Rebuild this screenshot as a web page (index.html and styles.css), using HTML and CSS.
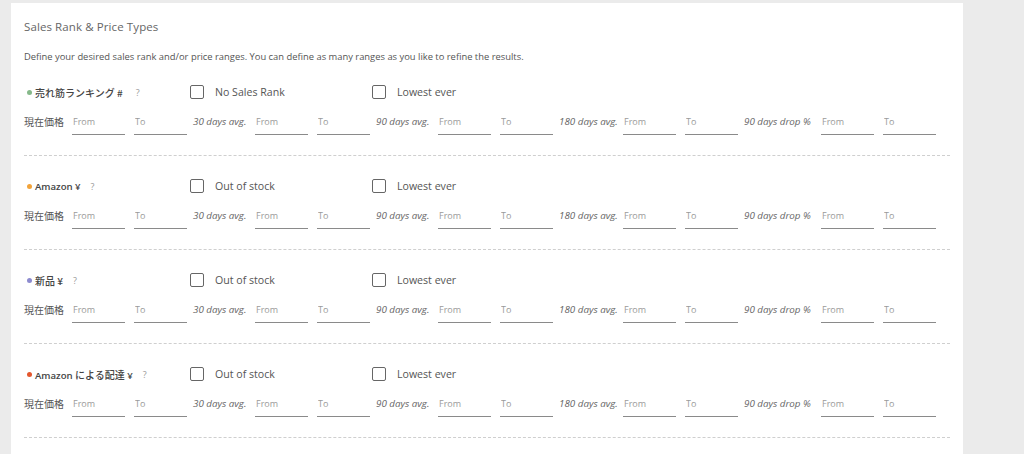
FILE: index.html
```html
<!DOCTYPE html>
<html lang="ja">
<head>
<meta charset="utf-8">
<title>Sales Rank &amp; Price Types</title>
<link rel="stylesheet" href="styles.css">
</head>
<body>
<div class="panel">
  <h2 class="title">Sales Rank &amp; Price Types</h2>
  <p class="desc">Define your desired sales rank and/or price ranges. You can define as many ranges as you like to refine the results.</p>

  <div class="section">
    <div class="head">
      <div class="name"><span class="dot dot-green"></span><span class="name-text jp">売れ筋ランキング #</span><span class="help help-wide">?</span></div>
      <label class="check"><span class="box"></span>No Sales Rank</label>
      <label class="check"><span class="box"></span>Lowest ever</label>
    </div>
    <div class="ranges">
      <span class="lbl lbl-cur">現在価格</span><input class="inp" placeholder="From"><input class="inp" placeholder="To">
      <span class="lbl lbl-30">30 days avg.</span><input class="inp" placeholder="From"><input class="inp" placeholder="To">
      <span class="lbl lbl-90">90 days avg.</span><input class="inp" placeholder="From"><input class="inp" placeholder="To">
      <span class="lbl lbl-180">180 days avg.</span><input class="inp" placeholder="From"><input class="inp" placeholder="To">
      <span class="lbl lbl-drop">90 days drop %</span><input class="inp" placeholder="From"><input class="inp" placeholder="To">
    </div>
  </div>

  <div class="section">
    <div class="head">
      <div class="name"><span class="dot dot-orange"></span><span class="name-text">Amazon ¥</span><span class="help">?</span></div>
      <label class="check"><span class="box"></span>Out of stock</label>
      <label class="check"><span class="box"></span>Lowest ever</label>
    </div>
    <div class="ranges">
      <span class="lbl lbl-cur">現在価格</span><input class="inp" placeholder="From"><input class="inp" placeholder="To">
      <span class="lbl lbl-30">30 days avg.</span><input class="inp" placeholder="From"><input class="inp" placeholder="To">
      <span class="lbl lbl-90">90 days avg.</span><input class="inp" placeholder="From"><input class="inp" placeholder="To">
      <span class="lbl lbl-180">180 days avg.</span><input class="inp" placeholder="From"><input class="inp" placeholder="To">
      <span class="lbl lbl-drop">90 days drop %</span><input class="inp" placeholder="From"><input class="inp" placeholder="To">
    </div>
  </div>

  <div class="section">
    <div class="head">
      <div class="name"><span class="dot dot-purple"></span><span class="name-text jp">新品 ¥</span><span class="help">?</span></div>
      <label class="check"><span class="box"></span>Out of stock</label>
      <label class="check"><span class="box"></span>Lowest ever</label>
    </div>
    <div class="ranges">
      <span class="lbl lbl-cur">現在価格</span><input class="inp" placeholder="From"><input class="inp" placeholder="To">
      <span class="lbl lbl-30">30 days avg.</span><input class="inp" placeholder="From"><input class="inp" placeholder="To">
      <span class="lbl lbl-90">90 days avg.</span><input class="inp" placeholder="From"><input class="inp" placeholder="To">
      <span class="lbl lbl-180">180 days avg.</span><input class="inp" placeholder="From"><input class="inp" placeholder="To">
      <span class="lbl lbl-drop">90 days drop %</span><input class="inp" placeholder="From"><input class="inp" placeholder="To">
    </div>
  </div>

  <div class="section">
    <div class="head">
      <div class="name"><span class="dot dot-red"></span><span class="name-text">Amazon <span class="jp">による配達</span> ¥</span><span class="help">?</span></div>
      <label class="check"><span class="box"></span>Out of stock</label>
      <label class="check"><span class="box"></span>Lowest ever</label>
    </div>
    <div class="ranges">
      <span class="lbl lbl-cur">現在価格</span><input class="inp" placeholder="From"><input class="inp" placeholder="To">
      <span class="lbl lbl-30">30 days avg.</span><input class="inp" placeholder="From"><input class="inp" placeholder="To">
      <span class="lbl lbl-90">90 days avg.</span><input class="inp" placeholder="From"><input class="inp" placeholder="To">
      <span class="lbl lbl-180">180 days avg.</span><input class="inp" placeholder="From"><input class="inp" placeholder="To">
      <span class="lbl lbl-drop">90 days drop %</span><input class="inp" placeholder="From"><input class="inp" placeholder="To">
    </div>
  </div>
</div>
</body>
</html>
```

FILE: styles.css
```css
html, body {
  margin: 0;
  padding: 0;
  background: #ebebeb;
  height: 100%;
  overflow: hidden;
}
body {
  font-family: "Open Sans", "Noto Sans CJK JP", sans-serif;
  color: #555;
}
.panel {
  margin: 3px 0 0 11px;
  width: 926px;
  height: 437px;
  background: #fff;
  padding: 14px 13px 0 13px;
}
.title {
  margin: 0;
  font-size: 11.5px;
  font-weight: 400;
  line-height: 20px;
  color: #666;
  letter-spacing: 0.1px;
}
.desc {
  margin: 12px 0 0 0;
  font-size: 9.4px;
  line-height: 16px;
  color: #555;
}
.section {
  padding: 20px 0 20px 0;
  border-bottom: 1px dashed #cfcfcf;
}
.section:first-of-type {
  padding-top: 17px;
}
.head {
  display: flex;
  align-items: center;
  height: 20px;
}
.name {
  width: 166px;
  display: flex;
  align-items: center;
  font-size: 9.6px;
  font-weight: 600;
  color: #444;
}
.jp {
  font-family: "Noto Sans CJK JP", sans-serif;
  font-weight: 500;
  font-size: 10px;
}
.name-text {
  white-space: nowrap;
}
.dot {
  width: 5px;
  height: 5px;
  border-radius: 50%;
  margin: 0 3px 0 3px;
  flex: none;
}
.dot-green { background: #86b98a; }
.dot-orange { background: #f2a33a; }
.dot-purple { background: #8d8bcf; }
.dot-red { background: #e4572e; }
.help {
  margin-left: 10px;
  font-size: 9px;
  font-weight: 400;
  color: #999;
}
.help-wide {
  margin-left: 13px;
}
.check {
  width: 182px;
  display: flex;
  align-items: center;
  font-size: 10.6px;
  color: #555;
  white-space: nowrap;
}
.box {
  width: 12px;
  height: 12px;
  border: 1px solid #666;
  border-radius: 2px;
  margin-right: 11px;
  flex: none;
}
.ranges {
  display: flex;
  align-items: flex-start;
  margin-top: 9px;
  height: 24px;
}
.lbl {
  font-size: 9.8px;
  font-style: italic;
  color: #666;
  white-space: nowrap;
  line-height: 21px;
  margin-left: 6px;
}
.lbl-cur {
  font-style: normal;
  font-family: "Noto Sans CJK JP", sans-serif;
  font-size: 10px;
  color: #555;
  margin-left: 0;
  width: 48px;
}
.lbl-30 { width: 62px; }
.lbl-90 { width: 62px; }
.lbl-180 { width: 64px; }
.lbl-drop { width: 77px; }
.inp {
  width: 53px;
  height: 24px;
  box-sizing: border-box;
  border: none;
  border-bottom: 1px solid #8a8a8a;
  padding: 0 0 2px 1px;
  margin: 0;
  font-family: "Open Sans", sans-serif;
  font-size: 9px;
  color: #555;
  background: transparent;
  outline: none;
}
.inp + .inp {
  margin-left: 9px;
}
.inp::placeholder {
  color: #9a9a9a;
}
```
